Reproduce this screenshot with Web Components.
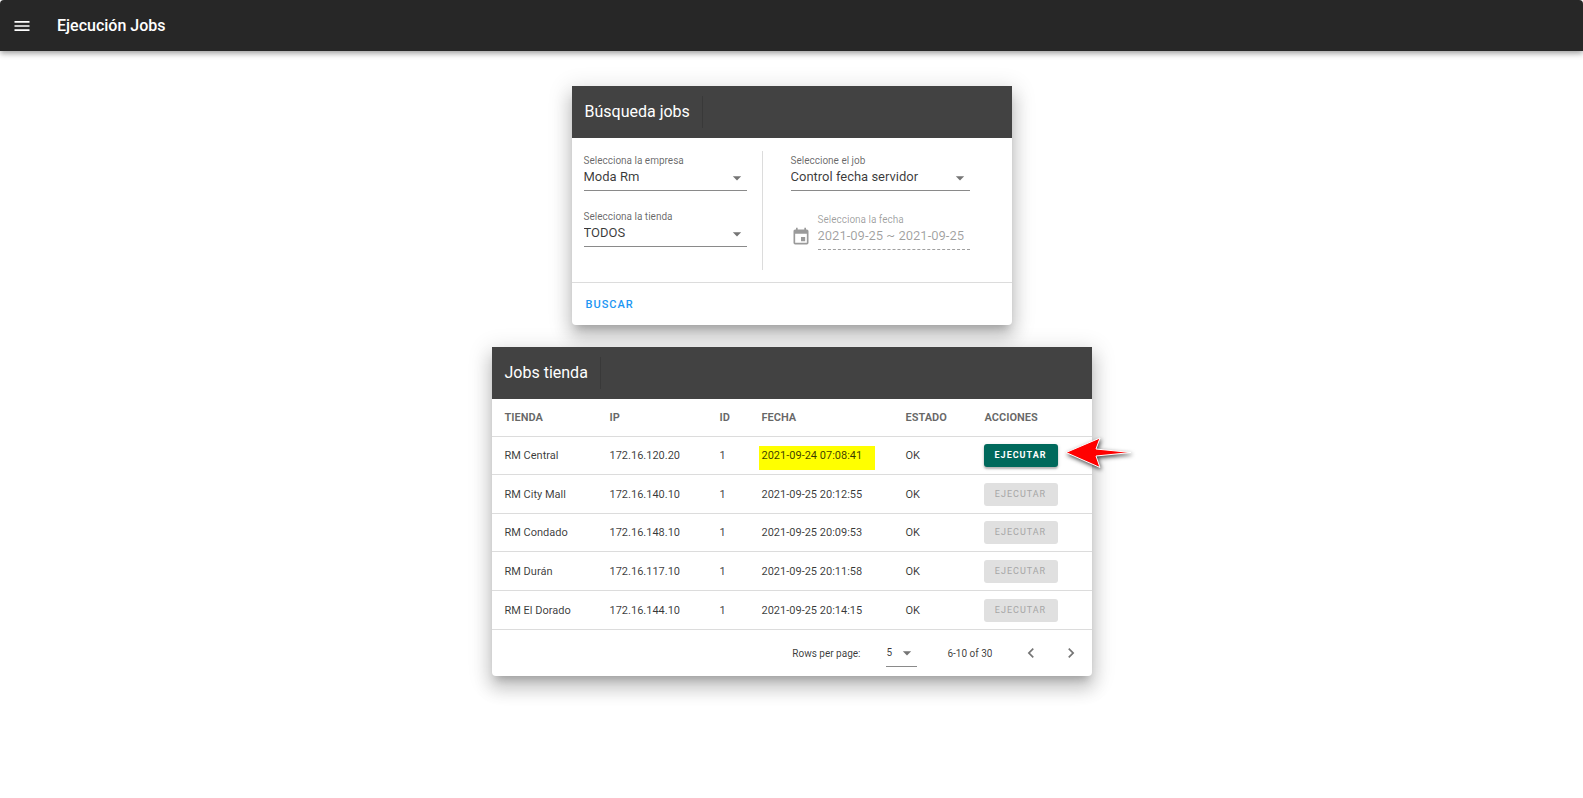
<!DOCTYPE html>
<html lang="es">
<head>
<meta charset="utf-8">
<meta name="viewport" content="width=device-width, initial-scale=1">
<title>Ejecución Jobs</title>
<style>
  body { margin: 0; background: #fff; font-family: Roboto, sans-serif; font-size: 13px; color: rgba(0,0,0,.78); }
</style>
</head>
<body>
<jobs-app></jobs-app>

<template id="t-app">
  <style>
    :host { display: block; }
    main { display: flex; flex-direction: column; align-items: center; gap: 22px; padding: 35px 12px; }
    .search { width: 100%; max-width: 440px; }
    .results { width: 100%; max-width: 600px; }
  </style>
  <app-bar>Ejecución Jobs</app-bar>
  <main>
    <panel-card class="search" heading="Búsqueda jobs"><search-form></search-form></panel-card>
    <panel-card class="results" heading="Jobs tienda">
      <jobs-table></jobs-table>
      <table-pager></table-pager>
    </panel-card>
  </main>
</template>

<template id="t-bar">
  <style>
    :host { display: block; }
    header { display: flex; align-items: center; gap: 25px; height: 51px; padding: 0 12px; background: #272727; color: #fff; border-radius: 4px 4px 0 0;
      box-shadow: 0 2px 4px -1px rgba(0,0,0,.2), 0 4px 5px rgba(0,0,0,.14), 0 1px 10px rgba(0,0,0,.12); }
    button { display: flex; padding: 0; border: 0; background: none; color: inherit; cursor: pointer; }
    svg { width: 20px; height: 20px; fill: currentColor; }
    h1 { margin: 0; font-size: 16px; font-weight: 500; line-height: 20px; }
  </style>
  <header>
    <button type="button" aria-label="Menú"><svg viewBox="0 0 24 24"><path d="M3,6H21V8H3V6M3,11H21V13H3V11M3,16H21V18H3V16Z"/></svg></button>
    <h1><slot></slot></h1>
  </header>
</template>

<template id="t-card">
  <style>
    :host { display: block; border-radius: 0 0 4px 4px; background: #fff;
      box-shadow: 0 7px 8px -4px rgba(0,0,0,.2), 0 12px 17px 2px rgba(0,0,0,.14), 0 5px 22px 4px rgba(0,0,0,.12); }
    header { display: flex; align-items: center; height: 52px; padding: 0 13px; background: #424242; color: #fff; }
    h2 { margin: 0; padding-right: 12px; border-right: 1px solid #393939; font-size: 16px; font-weight: 400; line-height: 32px; }
  </style>
  <header><h2></h2></header>
  <slot></slot>
</template>

<template id="t-select">
  <style>
    :host { display: grid; }
    label { font-size: 10px; line-height: 14px; color: rgba(0,0,0,.6); }
    .box { display: grid; align-items: start; border-bottom: 1px solid #8a8a8a; }
    .box > * { grid-area: 1 / 1; }
    select { appearance: none; width: 100%; height: 22px; margin: 0; padding: 0 20px 6px 0; border: 0; background: none; font: inherit; color: inherit; }
    svg { width: 20px; height: 20px; justify-self: end; fill: #757575; pointer-events: none; }
    :host([compact]) { font-size: 10px; }
    :host([compact]) label { display: none; }
    :host([compact]) .box { align-items: center; }
    :host([compact]) select { height: 27px; padding-bottom: 0; }
  </style>
  <label for="field"></label>
  <div class="box">
    <select id="field"><option></option></select>
    <svg viewBox="0 0 24 24"><path d="M7,10L12,15L17,10H7Z"/></svg>
  </div>
</template>

<template id="t-date">
  <style>
    :host { display: grid; grid-template-columns: 20px 1fr; gap: 0 7px; color: rgba(0,0,0,.38); }
    svg { width: 20px; height: 20px; grid-column: 1; grid-row: 2; fill: #9a9a9a; }
    label { grid-column: 2; font-size: 10px; line-height: 14px; }
    input { grid-column: 2; box-sizing: border-box; width: 100%; min-width: 0; height: 23px; padding: 0 0 6px; border: 0; border-bottom: 1px dashed #a0a0a0; border-radius: 0; background: none; font: inherit; color: inherit; }
  </style>
  <label for="date">Selecciona la fecha</label>
  <svg viewBox="0 0 24 24"><path d="M19,19H5V8H19M16,1V3H8V1H6V3H5C3.89,3 3,3.89 3,5V19A2,2 0 0,0 5,21H19A2,2 0 0,0 21,19V5C21,3.89 20.1,3 19,3H18V1M17,12H12V17H17V12Z"/></svg>
  <input id="date" type="text" value="2021-09-25 ~ 2021-09-25" disabled>
</template>

<template id="t-form">
  <style>
    :host { display: block; }
    .fields { display: grid; grid-template-columns: 179px 1fr; padding: 13px 12px 12px; }
    .col { display: grid; align-content: start; padding-top: 3px; }
    .left { gap: 19px; padding-right: 15px; border-right: 1px solid #dcdcdc; min-height: 116px; }
    .right { gap: 22px; padding-left: 28px; padding-right: 30px; }
    footer { border-top: 1px solid #dcdcdc; padding: 11px 14px 9px; }
    button { padding: 0; border: 0; background: none; color: #2196f3; font: 500 11px/22px Roboto, sans-serif; letter-spacing: 1px; cursor: pointer; }
  </style>
  <form onsubmit="return false">
    <div class="fields">
      <div class="col left">
        <select-field label="Selecciona la empresa" value="Moda Rm"></select-field>
        <select-field label="Selecciona la tienda" value="TODOS"></select-field>
      </div>
      <div class="col right">
        <select-field label="Seleccione el job" value="Control fecha servidor"></select-field>
        <date-field></date-field>
      </div>
    </div>
    <footer><button>BUSCAR</button></footer>
  </form>
</template>

<template id="t-run">
  <style>
    :host { display: block; position: relative; width: 74px; }
    button { display: block; width: 100%; height: 23px; padding: 0; border: 0; border-radius: 3px; background: #00695c; color: #fff; font: 700 9px/23px Roboto, sans-serif; letter-spacing: 1px; text-align: center;
      box-shadow: 0 2px 2px rgba(0,0,0,.24), 0 1px 4px rgba(0,0,0,.12); cursor: pointer; }
    button:disabled { background: #e0e0e0; color: #a6a6a6; font-weight: 400; box-shadow: none; cursor: default; }
    svg { display: none; position: absolute; left: 100%; top: -10px; width: 80px; height: 40px; overflow: visible; }
    :host([pointed]) svg { display: block; }
    path { fill: #f00; stroke: #fff; stroke-width: 1; filter: drop-shadow(1px 2px 2px rgba(0,0,0,.7)); }
  </style>
  <button type="button">EJECUTAR</button>
  <svg viewBox="0 0 80 40" aria-hidden="true"><path d="M8 18.5L42 4L38 15L73 18.5L38 22L42 33.5Z"/></svg>
</template>

<template id="t-table">
  <style>
    :host { display: block; }
    table { width: 100%; border-collapse: separate; border-spacing: 0; table-layout: fixed; font-size: 11px; line-height: 16px; }
    th, td { box-sizing: border-box; height: 38px; padding: 0 0 0 13px; border-bottom: 1px solid #dcdcdc; text-align: left; white-space: nowrap; }
    td { padding-top: 1px; }
    td:last-child { padding: 0 0 0 12px; }
    tbody tr:nth-child(even) td, tbody tr:last-child td { height: 39px; }
    th { font-weight: 700; color: rgba(0,0,0,.6); }
    .tienda { width: 105px; } .ip { width: 110px; } .id { width: 42px; } .fecha { width: 144px; } .estado { width: 79px; }
    mark { margin-left: -3px; padding: 3px 13px 8px 3px; background: #ff0; color: inherit; }
  </style>
  <table>
    <thead><tr><th class="tienda">TIENDA</th><th class="ip">IP</th><th class="id">ID</th><th class="fecha">FECHA</th><th class="estado">ESTADO</th><th>ACCIONES</th></tr></thead>
    <tbody></tbody>
  </table>
</template>

<template id="t-pager">
  <style>
    :host { display: flex; align-items: center; justify-content: flex-end; height: 46px; padding-right: 11px; font-size: 10px; }
    select-field { width: 31px; margin: 0 30px 0 26px; }
    button { display: flex; padding: 0; border: 0; background: none; cursor: pointer; }
    .range { margin-right: 28px; }
    .prev { margin-right: 20px; }
    svg { width: 20px; height: 20px; fill: #757575; }
  </style>
  <span>Rows per page:</span>
  <select-field compact label="Rows per page" value="5"></select-field>
  <span class="range">6-10 of 30</span>
  <button type="button" class="prev" aria-label="Anterior"><svg viewBox="0 0 24 24"><path d="M15.41,16.58L10.83,12L15.41,7.41L14,6L8,12L14,18L15.41,16.58Z"/></svg></button>
  <button type="button" aria-label="Siguiente"><svg viewBox="0 0 24 24"><path d="M8.59,16.58L13.17,12L8.59,7.41L10,6L16,12L10,18L8.59,16.58Z"/></svg></button>
</template>

<script>
  class Base extends HTMLElement {
    constructor() {
      super();
      this.attachShadow({ mode: 'open' })
        .append(document.getElementById(this.constructor.template).content.cloneNode(true));
    }
    $(selector) { return this.shadowRoot.querySelector(selector); }
  }

  class SelectField extends Base {
    static template = 't-select';
    connectedCallback() {
      this.$('label').textContent = this.getAttribute('label');
      this.$('select').setAttribute('aria-label', this.getAttribute('label'));
      this.$('option').textContent = this.getAttribute('value');
    }
  }
  class DateField extends Base { static template = 't-date'; }

  class RunButton extends Base {
    static template = 't-run';
    connectedCallback() { this.$('button').disabled = this.hasAttribute('disabled'); }
  }

  class PanelCard extends Base {
    static template = 't-card';
    connectedCallback() { this.$('h2').textContent = this.getAttribute('heading'); }
  }

  const jobs = [
    { tienda: 'RM Central', ip: '172.16.120.20', fecha: '2021-09-24 07:08:41', late: true },
    { tienda: 'RM City Mall', ip: '172.16.140.10', fecha: '2021-09-25 20:12:55' },
    { tienda: 'RM Condado', ip: '172.16.148.10', fecha: '2021-09-25 20:09:53' },
    { tienda: 'RM Durán', ip: '172.16.117.10', fecha: '2021-09-25 20:11:58' },
    { tienda: 'RM El Dorado', ip: '172.16.144.10', fecha: '2021-09-25 20:14:15' },
  ];
  class JobsTable extends Base {
    static template = 't-table';
    connectedCallback() {
      this.$('tbody').innerHTML = jobs.map(j => `<tr><td>${j.tienda}</td><td>${j.ip}</td><td>1</td>
        <td>${j.late ? `<mark>${j.fecha}</mark>` : j.fecha}</td><td>OK</td>
        <td><run-button ${j.late ? 'pointed' : 'disabled'}></run-button></td></tr>`).join('');
    }
  }
  class TablePager extends Base { static template = 't-pager'; }
  class SearchForm extends Base { static template = 't-form'; }
  class AppBar extends Base { static template = 't-bar'; }
  class JobsApp extends Base { static template = 't-app'; }

  customElements.define('select-field', SelectField);
  customElements.define('date-field', DateField);
  customElements.define('run-button', RunButton);
  customElements.define('panel-card', PanelCard);
  customElements.define('jobs-table', JobsTable);
  customElements.define('table-pager', TablePager);
  customElements.define('search-form', SearchForm);
  customElements.define('app-bar', AppBar);
  customElements.define('jobs-app', JobsApp);
</script>
</body>
</html>
